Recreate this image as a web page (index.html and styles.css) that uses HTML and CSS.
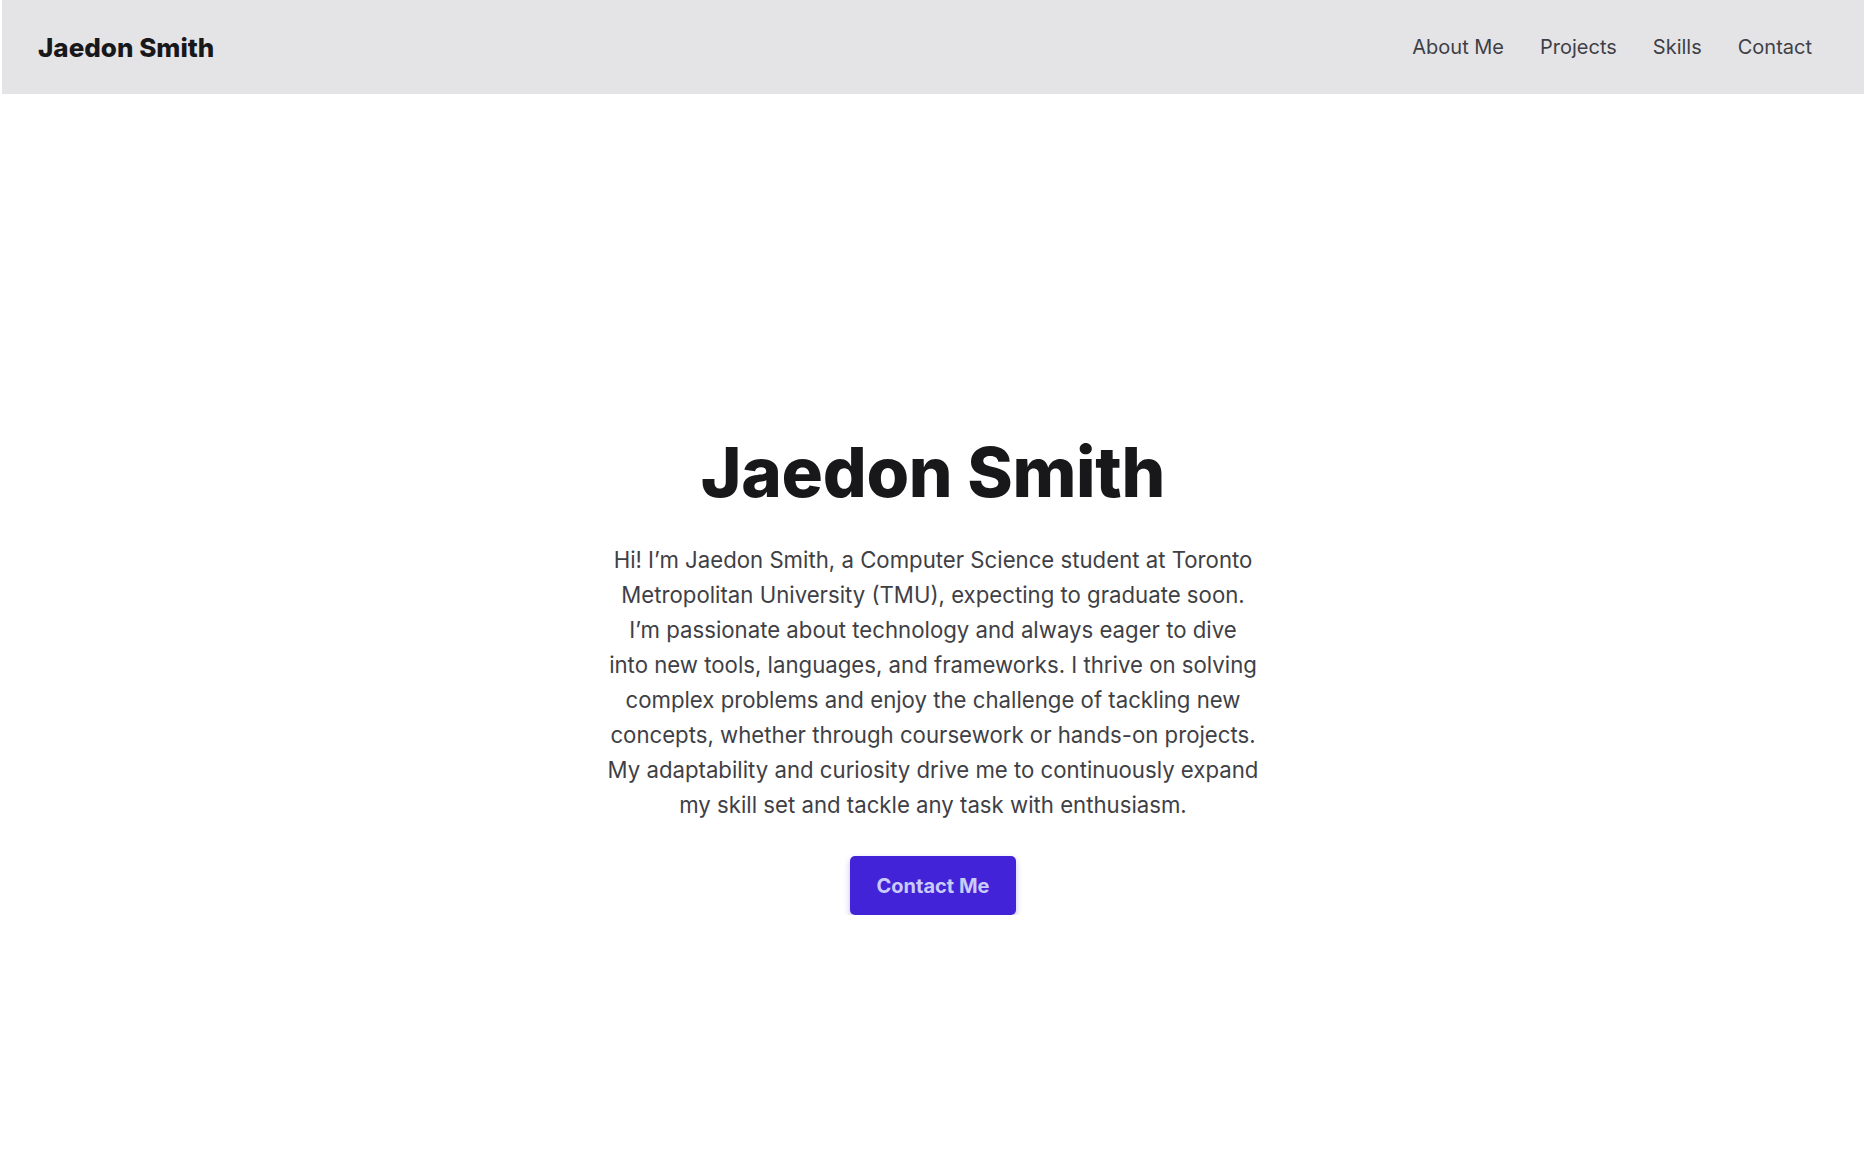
FILE: index.html
```html
<!DOCTYPE html>
<html lang="en">
<head>
<meta charset="utf-8">
<title>Jaedon Smith</title>
<link rel="stylesheet" href="styles.css">
</head>
<body>
<header class="site-header">
  <a class="logo" href="#">Jaedon Smith</a>
  <nav class="nav">
    <a href="#about">About Me</a>
    <a href="#projects">Projects</a>
    <a href="#skills">Skills</a>
    <a href="#contact">Contact</a>
  </nav>
</header>
<main class="hero">
  <h1 class="hero-title">Jaedon Smith</h1>
  <p class="hero-text">Hi! I’m Jaedon Smith, a Computer Science student at Toronto Metropolitan University (TMU), expecting to graduate soon. I’m passionate about technology and always eager to dive into new tools, languages, and frameworks. I thrive on solving complex problems and enjoy the challenge of tackling new concepts, whether through coursework or hands-on projects. My adaptability and curiosity drive me to continuously expand my skill set and tackle any task with enthusiasm.</p>
  <a class="btn" href="#contact">Contact Me</a>
</main>
</body>
</html>
```
FILE: styles.css
```css
* { box-sizing: border-box; }
html, body { margin: 0; padding: 0; background: #ffffff; }
body {
  font-family: Inter, "Noto Sans", "Liberation Sans", sans-serif;
  color: #18181b;
}
a { text-decoration: none; color: inherit; }

.site-header {
  margin: 0 2px;
  height: 94px;
  background: #e4e4e7;
  display: flex;
  align-items: center;
  justify-content: space-between;
  padding: 0 52px 0 36px;
}
.logo {
  font-size: 26px;
  font-weight: 800;
  color: #18181b;
}
.nav {
  display: flex;
  gap: 36px;
}
.nav a {
  font-size: 20px;
  color: #3f3f46;
}

.hero {
  display: flex;
  flex-direction: column;
  align-items: center;
  text-align: center;
  padding-top: 337px;
}
.hero-title {
  margin: 0;
  font-size: 69px;
  font-weight: 800;
  line-height: 1.21;
  color: #18181b;
  letter-spacing: -0.3px;
}
.hero-text {
  margin: 28px 0 0;
  max-width: 651px;
  font-size: 22.2px;
  line-height: 35px;
  color: #3f3f46;
}
.btn {
  margin-top: 34px;
  width: 166px;
  height: 59px;
  display: flex;
  align-items: center;
  justify-content: center;
  background: #4323d8;
  color: #c9cbfb;
  font-size: 20px;
  font-weight: 700;
  border-radius: 5px;
  box-shadow: 0 3px 6px rgba(67, 35, 216, 0.3);
}
```
